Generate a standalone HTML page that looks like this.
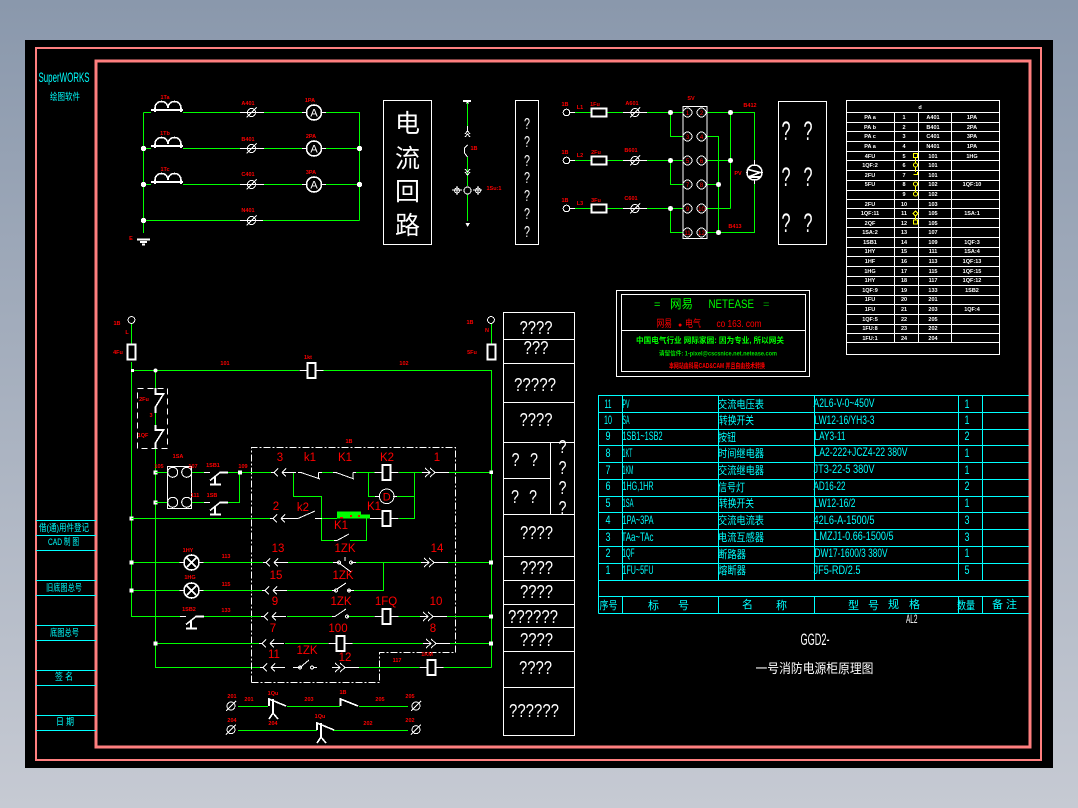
<!DOCTYPE html>
<html lang="zh">
<head>
<meta charset="utf-8">
<title>GGD2 一号消防电源柜原理图</title>
<style>
html,body{margin:0;padding:0;width:1078px;height:808px;overflow:hidden;background:linear-gradient(180deg,#8a98ac 0%,#c6cad3 100%)}
svg{position:absolute;left:0;top:0;display:block;shape-rendering:crispEdges}
text{font-family:"Liberation Sans","Noto Sans CJK SC",sans-serif}
.g{fill:none;stroke:#00ff00;stroke-width:1}
.w{fill:none;stroke:#fff;stroke-width:1}
.w2{fill:none;stroke:#fff;stroke-width:1.6}
.p{fill:none;stroke:#ff7f7f}
.cy{fill:none;stroke:#00ffff;stroke-width:1}
.d{fill:#fff;stroke:none}
.r{fill:#f00;font-size:5.5px;font-weight:bold;text-anchor:middle}
.n{fill:#f00;font-size:6px;text-anchor:middle}
.b{fill:#f00;font-size:11.5px;text-anchor:middle}
.t{fill:#fff;font-size:5.5px;font-weight:bold;text-anchor:middle}
.q{fill:#fff;font-size:18px;text-anchor:middle}
.c{fill:#0ff;font-size:12px}
.cm{fill:#0ff;font-size:12px;text-anchor:middle}
.h{fill:#0ff;font-size:11px}
.tb{fill:#0ff;font-size:9.5px}
.z{font-family:"WenQuanYi Zen Hei","Noto Sans CJK SC",sans-serif}
</style>
</head>
<body>
<svg width="1078" height="808" viewBox="0 0 1078 808" xmlns="http://www.w3.org/2000/svg">
<defs>
<g id="sc"><circle r="4" class="w"/><path class="w" d="M-5,5 L5,-5"/></g>
<g id="cl"><path class="w" d="M-2,0H1L5,-4M1,0L5,4M9,0L13,-4M9,0L13,4M9,0H23"/></g>
<g id="cr"><path class="w" d="M0,-4.5L5,0L0,4.5M5,-4.5L10,0L5,4.5M-3,0H5M10,0H24"/></g>
<g id="ct"><path class="w2" d="M-17,-2H15M-13,-2V0M13,-2V0"/><path class="w2" d="M-13,-3V-4A6.5,6.5 0 0 1 0,-4A6.5,6.5 0 0 1 13,-4V-3"/></g>
<g id="lamp"><circle r="7.5" class="w2"/><path class="w2" d="M-4.5,-4.5L4.5,4.5M-4.5,4.5L4.5,-4.5"/><path class="w" d="M-12,0H-8M8,0H12"/></g>
<g id="coil"><rect x="-4" y="-7.5" width="8" height="15" class="w2" stroke-width="2"/><path class="w" d="M-12,0H-5M5,0H12"/></g>
<g id="thr"><path class="w2" d="M0,0V-7L17,0M4,-7V8M0,13L4,7L9,13"/></g>
<g id="sb"><path class="w" d="M-6,0H0"/><path class="w2" d="M0,8L10,0H18M5,4V12M0,12H11"/></g>
</defs>

<!-- sheet -->
<rect x="25" y="40" width="1028" height="728" fill="#000"/>
<rect x="36" y="48" width="1005" height="712" class="p" stroke-width="2"/>
<rect x="96" y="61" width="934" height="686" class="p" stroke-width="3"/>

<!-- title block -->
<text x="38.5" y="82" fill="#0ff" font-size="14" textLength="51" lengthAdjust="spacingAndGlyphs">SuperWORKS</text>
<text x="50" y="100" class="tb" textLength="30" lengthAdjust="spacingAndGlyphs">绘图软件</text>
<path class="cy" d="M36,520.5H96M36,535.5H96M36,550.5H96M36,580.5H96M36,595.5H96M36,625.5H96M36,640.5H96M36,670.5H96M36,685.5H96M36,715.5H96M36,730.5H96"/>
<text x="39" y="531" class="tb" textLength="50" lengthAdjust="spacingAndGlyphs">借(通)用件登记</text>
<text x="48" y="545" class="tb" textLength="31" lengthAdjust="spacingAndGlyphs">CAD 制 图</text>
<text x="46" y="591" class="tb" textLength="36" lengthAdjust="spacingAndGlyphs">旧底图总号</text>
<text x="50" y="636" class="tb" textLength="29" lengthAdjust="spacingAndGlyphs">底图总号</text>
<text x="55" y="680" class="tb" textLength="18" lengthAdjust="spacingAndGlyphs">签 名</text>
<text x="56" y="725" class="tb" textLength="18" lengthAdjust="spacingAndGlyphs">日 期</text>

<!-- current circuit -->
<path class="g" d="M143.5,112.5V233M143.5,112.5H151M183,112.5H240M264,112.5H302M326,112.5H359.5V220.5M143.5,148.5H151M183,148.5H240M264,148.5H302M326,148.5H359.5M143.5,184.5H151M183,184.5H240M264,184.5H302M326,184.5H359.5M143.5,220.5H240M263,220.5H359.5"/>
<use href="#ct" x="168" y="112"/><use href="#ct" x="168" y="148"/><use href="#ct" x="168" y="184"/>
<path class="w" d="M240,112.5H264M240,148.5H264M240,184.5H264M240,220.5H263M302,112.5H306M322,112.5H326M302,148.5H306M322,148.5H326M302,184.5H306M322,184.5H326"/>
<use href="#sc" x="251.5" y="112.5"/><use href="#sc" x="251.5" y="148.5"/><use href="#sc" x="251.5" y="184.5"/><use href="#sc" x="251.5" y="220.5"/>
<circle cx="314" cy="112.5" r="7.5" class="w2"/><circle cx="314" cy="148.5" r="7.5" class="w2"/><circle cx="314" cy="184.5" r="7.5" class="w2"/>
<text x="314" y="116.5" fill="#fff" font-size="11" text-anchor="middle">A</text>
<text x="314" y="152.5" fill="#fff" font-size="11" text-anchor="middle">A</text>
<text x="314" y="188.5" fill="#fff" font-size="11" text-anchor="middle">A</text>
<circle cx="143.5" cy="148.5" r="2.7" class="d"/><circle cx="143.5" cy="184.5" r="2.7" class="d"/><circle cx="143.5" cy="220.5" r="2.7" class="d"/><circle cx="359.5" cy="148.5" r="2.7" class="d"/><circle cx="359.5" cy="184.5" r="2.7" class="d"/>
<path class="w2" d="M137,239.5H150M140,242H147M142,244.5H145"/>
<g>
<text class="r" x="165" y="99">1Ta</text><text class="r" x="165" y="135">1Tb</text><text class="r" x="165" y="171">1Tc</text>
<text class="r" x="248" y="105">A401</text><text class="r" x="248" y="141">B401</text><text class="r" x="248" y="176">C401</text><text class="r" x="248" y="212">N401</text>
<text class="r" x="310" y="102">1PA</text><text class="r" x="311" y="138">2PA</text><text class="r" x="311" y="174">3PA</text>
<text class="r" x="131" y="240">E</text><text class="r" x="474" y="150">1B</text><text class="r" x="494" y="190">1Su:1</text>
</g>

<!-- boxes -->
<rect x="383.5" y="100.5" width="48" height="144" class="w"/>
<g fill="#fff" font-size="25" text-anchor="middle" class="z">
<text x="407.5" y="132" class="z">电</text><text x="407.5" y="167" class="z">流</text><text x="407.5" y="200" class="z">回</text><text x="407.5" y="234" class="z">路</text>
</g>
<!-- vertical switch -->
<path class="w2" d="M463,101H471M467.5,101V104"/>
<path class="g" d="M467.5,103V126M467.5,157V186M467.5,194V221"/>
<path class="w" d="M467.5,126V132M465,134L467.5,131L470,134M465,137L467.5,134L470,137M467.5,145L464.5,148V153L467.5,157M465,169L467.5,172L470,169M465,172L467.5,175L470,172"/>
<circle cx="467.5" cy="190.5" r="3.5" class="w"/>
<path class="w" d="M457,186V195M482,190H473M462,190H452M478,186V195"/>
<circle cx="457" cy="190.5" r="2.5" class="w"/><circle cx="478" cy="190.5" r="2.5" class="w"/>
<path class="d" d="M465.5,223H470L467.5,227Z"/>
<rect x="515.5" y="100.5" width="23" height="144" class="w"/>
<g class="q" style="font-size:16px">
<text x="527" y="129" textLength="6" lengthAdjust="spacingAndGlyphs">?</text><text x="527" y="147" textLength="6" lengthAdjust="spacingAndGlyphs">?</text><text x="527" y="166" textLength="6" lengthAdjust="spacingAndGlyphs">?</text><text x="527" y="183" textLength="6" lengthAdjust="spacingAndGlyphs">?</text><text x="527" y="201" textLength="6" lengthAdjust="spacingAndGlyphs">?</text><text x="527" y="219" textLength="6" lengthAdjust="spacingAndGlyphs">?</text><text x="527" y="237" textLength="6" lengthAdjust="spacingAndGlyphs">?</text>
</g>

<!-- voltmeter circuit -->
<path class="g" d="M575,112.5H591M607,112.5H623M647,112.5H683M575,160.5H591M607,160.5H623M647,160.5H683M575,208.5H591M607,208.5H623M647,208.5H683M670.5,112.5V136.5H683M670.5,160.5V184.5H683M670.5,208.5V232.5H683M706,112.5H754.5V160M754.5,184V232.5H706M706,136.5H718.5V232.5M706,160.5H730.5M706,184.5H718.5M706,208.5H730.5M730.5,112.5V208.5"/>
<path class="w" d="M569,112.5H575M569,160.5H575M569,208.5H575M623,112.5H647M623,160.5H647M623,208.5H647M754.5,160V165M754.5,180V184"/>
<circle cx="566.5" cy="112.5" r="3.3" class="w"/><circle cx="566.5" cy="160.5" r="3.3" class="w"/><circle cx="566.5" cy="208.5" r="3.3" class="w"/>
<rect x="591.5" y="108.5" width="15" height="8" class="w2"/><rect x="591.5" y="156.5" width="15" height="8" class="w2"/><rect x="591.5" y="204.5" width="15" height="8" class="w2"/>
<use href="#sc" x="635" y="112.5"/><use href="#sc" x="635" y="160.5"/><use href="#sc" x="635" y="208.5"/>
<rect x="683" y="106.5" width="24" height="132" class="w"/>
<g class="w">
<circle cx="687.5" cy="112.5" r="4.5"/><circle cx="701.5" cy="112.5" r="4.5"/><circle cx="687.5" cy="136.5" r="4.5"/><circle cx="701.5" cy="136.5" r="4.5"/><circle cx="687.5" cy="160.5" r="4.5"/><circle cx="701.5" cy="160.5" r="4.5"/><circle cx="687.5" cy="184.5" r="4.5"/><circle cx="701.5" cy="184.5" r="4.5"/><circle cx="687.5" cy="208.5" r="4.5"/><circle cx="701.5" cy="208.5" r="4.5"/><circle cx="687.5" cy="232.5" r="4.5"/><circle cx="701.5" cy="232.5" r="4.5"/>
</g>
<g class="n">
<text x="687.5" y="115">1</text><text x="701.5" y="115">2</text><text x="687.5" y="139">3</text><text x="701.5" y="139">4</text><text x="687.5" y="163">5</text><text x="701.5" y="163">6</text><text x="687.5" y="187">7</text><text x="701.5" y="187">8</text><text x="687.5" y="211">9</text><text x="701.5" y="211">10</text><text x="687.5" y="235">11</text><text x="701.5" y="235">12</text>
</g>
<circle cx="670.5" cy="112.5" r="2.5" class="d"/><circle cx="670.5" cy="160.5" r="2.5" class="d"/><circle cx="670.5" cy="208.5" r="2.5" class="d"/><circle cx="730.5" cy="112.5" r="2.5" class="d"/><circle cx="730.5" cy="160.5" r="2.5" class="d"/><circle cx="718.5" cy="184.5" r="2.5" class="d"/><circle cx="718.5" cy="232.5" r="2.5" class="d"/>
<circle cx="754.5" cy="172.5" r="7.5" class="w2"/>
<path class="w2" d="M748,169.5L760,172.5L748,177H760"/>
<g>
<text class="r" x="565" y="106">1B</text><text class="r" x="580" y="109">L1</text><text class="r" x="595" y="106">1Fu</text><text class="r" x="632" y="105">A601</text><text class="r" x="691" y="100">SV</text><text class="r" x="750" y="107">B412</text>
<text class="r" x="565" y="154">1B</text><text class="r" x="580" y="157">L2</text><text class="r" x="596" y="154">2Fu</text><text class="r" x="631" y="152">B601</text>
<text class="r" x="565" y="202">1B</text><text class="r" x="580" y="205">L3</text><text class="r" x="596" y="202">3Fu</text><text class="r" x="631" y="200">C601</text>
<text class="r" x="738" y="175">PV</text><text class="r" x="735" y="228">B413</text>
</g>
<rect x="778.5" y="101.5" width="48" height="143" class="w"/>
<g fill="#fff" font-size="27" text-anchor="middle">
<text x="786" y="140" textLength="9" lengthAdjust="spacingAndGlyphs">?</text><text x="808" y="140" textLength="9" lengthAdjust="spacingAndGlyphs">?</text>
<text x="786" y="186" textLength="9" lengthAdjust="spacingAndGlyphs">?</text><text x="808" y="186" textLength="9" lengthAdjust="spacingAndGlyphs">?</text>
<text x="786" y="232" textLength="9" lengthAdjust="spacingAndGlyphs">?</text><text x="808" y="232" textLength="9" lengthAdjust="spacingAndGlyphs">?</text>
</g>

<!-- terminal table -->
<rect x="846.5" y="100.5" width="153" height="254" class="w"/>
<path class="w" d="M846,112.5H999M846,122.5H999M846,131.5H999M846,141.5H999M846,151.5H999M846,160.5H999M846,170.5H999M846,180.5H999M846,190.5H999M846,199.5H999M846,208.5H999M846,218.5H999M846,227.5H999M846,237.5H999M846,247.5H999M846,256.5H999M846,266.5H999M846,276.5H999M846,285.5H999M846,295.5H999M846,304.5H999M846,314.5H999M846,324.5H999M846,333.5H999M846,342.5H999M894.5,112V343M918.5,112V343M951.5,112V343"/>
<g class="t">
<text x="920" y="109">d</text>
<text x="870" y="119">PA a</text><text x="904" y="119">1</text><text x="933" y="119">A401</text><text x="972" y="119">1PA</text>
<text x="870" y="129">PA b</text><text x="904" y="129">2</text><text x="933" y="129">B401</text><text x="972" y="129">2PA</text>
<text x="870" y="138">PA c</text><text x="904" y="138">3</text><text x="933" y="138">C401</text><text x="972" y="138">3PA</text>
<text x="870" y="148">PA a</text><text x="904" y="148">4</text><text x="933" y="148">N401</text><text x="972" y="148">1PA</text>
<text x="870" y="158">4FU</text><text x="904" y="158">5</text><text x="933" y="158">101</text><text x="972" y="158">1HG</text>
<text x="870" y="167">1QF:2</text><text x="904" y="167">6</text><text x="933" y="167">101</text>
<text x="870" y="177">2FU</text><text x="904" y="177">7</text><text x="933" y="177">101</text>
<text x="870" y="186">5FU</text><text x="904" y="186">8</text><text x="933" y="186">102</text><text x="972" y="186">1QF:10</text>
<text x="904" y="196">9</text><text x="933" y="196">102</text>
<text x="870" y="206">2FU</text><text x="904" y="206">10</text><text x="933" y="206">103</text>
<text x="870" y="215">1QF:11</text><text x="904" y="215">11</text><text x="933" y="215">105</text><text x="972" y="215">1SA:1</text>
<text x="870" y="225">2QF</text><text x="904" y="225">12</text><text x="933" y="225">105</text>
<text x="870" y="234">1SA:2</text><text x="904" y="234">13</text><text x="933" y="234">107</text>
<text x="870" y="244">1SB1</text><text x="904" y="244">14</text><text x="933" y="244">109</text><text x="972" y="244">1QF:3</text>
<text x="870" y="253">1HY</text><text x="904" y="253">15</text><text x="933" y="253">111</text><text x="972" y="253">1SA:4</text>
<text x="870" y="263">1HF</text><text x="904" y="263">16</text><text x="933" y="263">113</text><text x="972" y="263">1QF:13</text>
<text x="870" y="273">1HG</text><text x="904" y="273">17</text><text x="933" y="273">115</text><text x="972" y="273">1QF:15</text>
<text x="870" y="282">1HY</text><text x="904" y="282">18</text><text x="933" y="282">117</text><text x="972" y="282">1QF:12</text>
<text x="870" y="292">1QF:9</text><text x="904" y="292">19</text><text x="933" y="292">133</text><text x="972" y="292">1SB2</text>
<text x="870" y="301">1FU</text><text x="904" y="301">20</text><text x="933" y="301">201</text>
<text x="870" y="311">1FU</text><text x="904" y="311">21</text><text x="933" y="311">203</text><text x="972" y="311">1QF:4</text>
<text x="870" y="321">1QF:5</text><text x="904" y="321">22</text><text x="933" y="321">205</text>
<text x="870" y="330">1FU:8</text><text x="904" y="330">23</text><text x="933" y="330">202</text>
<text x="870" y="340">1FU:1</text><text x="904" y="340">24</text><text x="933" y="340">204</text>
</g>
<path fill="none" stroke="#ffff00" d="M915.5,158V163M915.5,167V172M915.5,186V192M915.5,215V220"/>
<g fill="none" stroke="#ffff00">
<rect x="913.5" y="153.5" width="4" height="4"/><circle cx="915.5" cy="165" r="2"/><path d="M913.5,174.5H917.5V172"/>
<circle cx="915.5" cy="184" r="2"/><circle cx="915.5" cy="194" r="2"/>
<path d="M915.5,211L918,213.5L915.5,216L913,213.5Z"/><rect x="913.5" y="220" width="4" height="4"/>
</g>

<!-- netease box -->
<rect x="616.5" y="290.5" width="193" height="86" class="w"/>
<rect x="621.5" y="294.5" width="184" height="77" class="w"/>
<path class="w" d="M621,330.5H805"/>
<g fill="#00ff00" font-size="12">
<text x="654" y="308" font-size="11">=</text>
<text x="670" y="308" textLength="23" lengthAdjust="spacingAndGlyphs">网易</text>
<text x="708.5" y="308" textLength="45.5" lengthAdjust="spacingAndGlyphs">NETEASE</text>
</g>
<text x="763" y="308" fill="#00a000" font-size="11">=</text>
<g fill="#f00" font-size="10">
<text x="656.5" y="327" textLength="15.5" lengthAdjust="spacingAndGlyphs">网易</text>
<text x="678" y="327" font-size="7">●</text>
<text x="685" y="327" textLength="16" lengthAdjust="spacingAndGlyphs">电气</text>
<text x="716.5" y="327" textLength="45" lengthAdjust="spacingAndGlyphs">co 163. com</text>
</g>
<text x="636" y="343" fill="#00ff00" font-size="8" font-weight="bold" textLength="148" lengthAdjust="spacingAndGlyphs">中国电气行业 网际家园: 因为专业, 所以网关</text>
<text x="659" y="355.5" fill="#00e000" font-size="6" font-weight="bold" textLength="118" lengthAdjust="spacingAndGlyphs">请留信件: 1-pixel@cscsnice.net.netease.com</text>
<text x="669" y="368" fill="#f00" font-size="7" font-weight="bold" textLength="96" lengthAdjust="spacingAndGlyphs">本网站由科局CAD&amp;CAM 并且自由技术转换</text>

<!-- parts list -->
<path class="cy" d="M598.5,395.5H1029M598.5,412.5H1029M598.5,429.5H1029M598.5,445.5H1029M598.5,462.5H1029M598.5,479.5H1029M598.5,496.5H1029M598.5,512.5H1029M598.5,529.5H1029M598.5,546.5H1029M598.5,563.5H1029M598.5,580.5H1029M598.5,596.5H1029M598.5,613.5H1029M598.5,395V613.5M622.5,395V580.5M718.5,395V580.5M814.5,395V580.5M958.5,395V580.5M982.5,395V580.5M622.5,596.5V613.5M718.5,596.5V613.5M814.5,596.5V613.5M958.5,596.5V613.5M982.5,596.5V613.5"/>
<g class="cm">
<text x="608" y="408" textLength="7" lengthAdjust="spacingAndGlyphs">11</text><text x="608" y="424" textLength="8" lengthAdjust="spacingAndGlyphs">10</text><text x="608" y="440" textLength="5" lengthAdjust="spacingAndGlyphs">9</text><text x="608" y="457" textLength="5" lengthAdjust="spacingAndGlyphs">8</text><text x="608" y="474" textLength="5" lengthAdjust="spacingAndGlyphs">7</text><text x="608" y="490" textLength="5" lengthAdjust="spacingAndGlyphs">6</text><text x="608" y="507" textLength="5" lengthAdjust="spacingAndGlyphs">5</text><text x="608" y="524" textLength="5" lengthAdjust="spacingAndGlyphs">4</text><text x="608" y="541" textLength="5" lengthAdjust="spacingAndGlyphs">3</text><text x="608" y="557" textLength="5" lengthAdjust="spacingAndGlyphs">2</text><text x="608" y="574" textLength="5" lengthAdjust="spacingAndGlyphs">1</text>
<text x="967" y="408" textLength="5" lengthAdjust="spacingAndGlyphs">1</text><text x="967" y="424" textLength="5" lengthAdjust="spacingAndGlyphs">1</text><text x="967" y="440" textLength="5" lengthAdjust="spacingAndGlyphs">2</text><text x="967" y="457" textLength="5" lengthAdjust="spacingAndGlyphs">1</text><text x="967" y="474" textLength="5" lengthAdjust="spacingAndGlyphs">1</text><text x="967" y="490" textLength="5" lengthAdjust="spacingAndGlyphs">2</text><text x="967" y="507" textLength="5" lengthAdjust="spacingAndGlyphs">1</text><text x="967" y="524" textLength="5" lengthAdjust="spacingAndGlyphs">3</text><text x="967" y="541" textLength="5" lengthAdjust="spacingAndGlyphs">3</text><text x="967" y="557" textLength="5" lengthAdjust="spacingAndGlyphs">1</text><text x="967" y="574" textLength="5" lengthAdjust="spacingAndGlyphs">5</text>
</g>
<g class="c">
<text x="622.5" y="408" textLength="7" lengthAdjust="spacingAndGlyphs">PV</text>
<text x="622.5" y="424" textLength="7" lengthAdjust="spacingAndGlyphs">SA</text>
<text x="622.5" y="440" textLength="40" lengthAdjust="spacingAndGlyphs">1SB1~1SB2</text>
<text x="622.5" y="457" textLength="10" lengthAdjust="spacingAndGlyphs">1KT</text>
<text x="622.5" y="474" textLength="11" lengthAdjust="spacingAndGlyphs">1KM</text>
<text x="622.5" y="490" textLength="31" lengthAdjust="spacingAndGlyphs">1HG,1HR</text>
<text x="622.5" y="507" textLength="11" lengthAdjust="spacingAndGlyphs">1SA</text>
<text x="622.5" y="524" textLength="31" lengthAdjust="spacingAndGlyphs">1PA~3PA</text>
<text x="621.5" y="541" textLength="32" lengthAdjust="spacingAndGlyphs">TAa~TAc</text>
<text x="622.5" y="557" textLength="12" lengthAdjust="spacingAndGlyphs">1QF</text>
<text x="622.5" y="574" textLength="31" lengthAdjust="spacingAndGlyphs">1FU~5FU</text>
<text x="813.5" y="407" textLength="61" lengthAdjust="spacingAndGlyphs">A2L6-V-0~450V</text>
<text x="814.5" y="424" textLength="60" lengthAdjust="spacingAndGlyphs">LW12-16/YH3-3</text>
<text x="814.5" y="440" textLength="31" lengthAdjust="spacingAndGlyphs">LAY3-11</text>
<text x="814.5" y="456" textLength="93" lengthAdjust="spacingAndGlyphs">LA2-222+JCZ4-22 380V</text>
<text x="813.5" y="473" textLength="61" lengthAdjust="spacingAndGlyphs">JT3-22-5 380V</text>
<text x="813.5" y="490" textLength="32" lengthAdjust="spacingAndGlyphs">AD16-22</text>
<text x="814.5" y="507" textLength="41" lengthAdjust="spacingAndGlyphs">LW12-16/2</text>
<text x="813.5" y="524" textLength="61" lengthAdjust="spacingAndGlyphs">42L6-A-1500/5</text>
<text x="814.5" y="540" textLength="79" lengthAdjust="spacingAndGlyphs">LMZJ1-0.66-1500/5</text>
<text x="814.5" y="557" textLength="73" lengthAdjust="spacingAndGlyphs">DW17-1600/3 380V</text>
<text x="813.5" y="574" textLength="47" lengthAdjust="spacingAndGlyphs">JF5-RD/2.5</text>
</g>
<g class="h">
<text x="718" y="408" textLength="46" lengthAdjust="spacingAndGlyphs">交流电压表</text>
<text x="719" y="424" textLength="35" lengthAdjust="spacingAndGlyphs">转换开关</text>
<text x="718" y="441" textLength="18" lengthAdjust="spacingAndGlyphs">按钮</text>
<text x="718" y="457" textLength="46" lengthAdjust="spacingAndGlyphs">时间继电器</text>
<text x="718" y="474" textLength="46" lengthAdjust="spacingAndGlyphs">交流继电器</text>
<text x="718" y="491" textLength="27" lengthAdjust="spacingAndGlyphs">信号灯</text>
<text x="719" y="507" textLength="35" lengthAdjust="spacingAndGlyphs">转换开关</text>
<text x="718" y="524" textLength="46" lengthAdjust="spacingAndGlyphs">交流电流表</text>
<text x="718" y="541" textLength="46" lengthAdjust="spacingAndGlyphs">电流互感器</text>
<text x="718" y="558" textLength="28" lengthAdjust="spacingAndGlyphs">断路器</text>
<text x="718" y="574" textLength="28" lengthAdjust="spacingAndGlyphs">熔断器</text>
<text x="599.5" y="609" textLength="18" lengthAdjust="spacingAndGlyphs">序号</text>
<text x="648" y="609">标</text><text x="678" y="609">号</text>
<text x="742" y="608">名</text><text x="776" y="609">称</text>
<text x="848" y="609">型</text><text x="868" y="609">号</text><text x="888" y="608">规</text><text x="909" y="608">格</text>
<text x="957" y="609" textLength="18" lengthAdjust="spacingAndGlyphs">数量</text>
<text x="992" y="608">备</text><text x="1006" y="608">注</text>
</g>
<text x="906" y="623" fill="#fff" font-size="12" textLength="11.5" lengthAdjust="spacingAndGlyphs">AL2</text>
<text x="800.5" y="645" fill="#fff" font-size="16.5" textLength="29" lengthAdjust="spacingAndGlyphs">GGD2-</text>
<text x="755.5" y="673" fill="#fff" font-size="13" textLength="118" lengthAdjust="spacingAndGlyphs">一号消防电源柜原理图</text>

<!-- control circuit rails -->
<path class="g" d="M131.5,324V344M131.5,362V616.5H180M155.5,370.5V388M155.5,448V667.5H262M131.5,370.5H299M323,370.5H491.5V667.5M491.5,324V344M155.5,412V425"/>
<circle cx="131.5" cy="320" r="3.4" class="w"/><circle cx="491" cy="320" r="3.4" class="w"/>
<rect x="127.5" y="344.5" width="8" height="15" class="w2"/><rect x="487.5" y="344.5" width="8" height="15" class="w2"/>
<use href="#coil" x="311.5" y="370.5"/>
<rect x="131" y="369" width="3" height="3" class="d"/><circle cx="155.5" cy="370.5" r="2" class="d"/>
<rect x="137.5" y="388.5" width="30" height="60" fill="none" stroke="#fff" stroke-dasharray="6 4"/>
<path class="w2" d="M155.5,388V394H163.5L155.5,407V413M155.5,425V430H163.5L155.5,443V448"/>
<rect x="153.5" y="470.5" width="4" height="4" class="d"/><rect x="153.5" y="500.5" width="4" height="4" class="d"/><rect x="129.5" y="516.5" width="4" height="4" class="d"/>
<rect x="167.5" y="466.5" width="24" height="42" class="w"/>
<circle cx="172.7" cy="472.3" r="5" class="w"/><circle cx="186.7" cy="472.3" r="5" class="w"/><circle cx="172.7" cy="502.3" r="5" class="w"/><circle cx="186.7" cy="502.3" r="5" class="w"/>
<path class="g" d="M155.5,472.5H167M155.5,502.5H167M192,472.5H204M192,502.5H204M228,472.5H267M239.5,472.5V502.5H228M131.5,518.5H266"/>
<use href="#sb" x="210" y="472.5"/><use href="#sb" x="210" y="502.5"/>
<rect x="238" y="470.5" width="4" height="4" class="d"/>
<!-- dash-dot control box -->
<path fill="none" stroke="#fff" stroke-dasharray="7 2 2 2" d="M251.5,682.5V447.5H455.5V652.5H379.5V682.5H251.5"/>

<!-- row 3/1 -->
<path class="g" d="M242,472.5H272M298,472.5V472.5M322,472.5H333M356,472.5H375M399,472.5H425M449,472.5H491.5M293.5,472.5V496.5H321.5V540.5H334M368.5,472.5V496.5H375M394,496.5H414.5M414.5,472.5V518.5H399M322,518.5H337M366.5,518.5V540.5H350M266,518.5H272M290,518.5H295"/>
<use href="#cl" x="273" y="472.5"/><use href="#cr" x="425" y="472.5"/>
<path class="w" d="M298,472.5H301L320,479M318.5,472.5V479M322,472.5H318.5M333,472.5H336L354,479M353,472.5V479M356,472.5H353"/>
<use href="#coil" x="386.5" y="472.5"/>
<circle cx="386.7" cy="496.3" r="7.3" class="w"/>
<path class="w" d="M375,496.5H380M393,496.5H397"/>
<text x="386.7" y="500.5" fill="#f00" font-size="11" text-anchor="middle">D</text>
<use href="#cl" x="272" y="518.5"/>
<path class="w" d="M295,518.5H298L315,511M315,518.5H322"/>
<path d="M337,511.5H361V514.5H370V518.5H337Z" fill="#00ff00"/>
<path d="M340,517H343V518.5H340ZM350,515H352V517H350ZM358,515H360V517H358Z" fill="#f00"/>
<path class="w" d="M370,518.5H382"/>
<use href="#coil" x="386.5" y="518.5"/>
<path class="w" d="M334,540.5H337L349,534M350,540.5H350"/>
<rect x="489.5" y="470.5" width="3.5" height="3.5" class="d"/>

<!-- rows -->
<path class="g" d="M131.5,562.5H180M200,562.5H265M288,562.5H333M356,562.5H423M448,562.5H491.5M131.5,590.5H180M200,590.5H264M287,590.5H332M354,590.5H383.5V562.5M204,616.5H263M287,616.5H332M348,616.5H374M398,616.5H422M447,616.5H491.5M155.5,643.5H260M285,643.5H328M352,643.5H425M445,643.5H491.5M353,667.5H419M443,667.5H491.5"/>
<use href="#lamp" x="191.5" y="562.5"/><use href="#lamp" x="191.5" y="590.5"/>
<use href="#cl" x="265" y="562.5"/><use href="#cl" x="264" y="590.5"/><use href="#cl" x="263" y="616.5"/><use href="#cl" x="261" y="643.5"/><use href="#cl" x="262" y="667.5"/>
<use href="#cr" x="424" y="562.5"/><use href="#cr" x="423" y="616.5"/><use href="#cr" x="426" y="643.5"/><use href="#cr" x="335" y="667.5"/>
<path class="w" d="M333,562.5H339M339,563L351,572M345,557V561M351,562.5H356"/>
<circle cx="339" cy="562.5" r="1.4" class="w"/><circle cx="351" cy="562.5" r="1.4" class="w"/>
<path class="w" d="M332,590.5H336M337,589L346,583M348,590.5H354"/>
<circle cx="336" cy="590.5" r="1.4" class="w"/><circle cx="349" cy="590.5" r="1.4" class="w"/>
<path class="w" d="M332,616.5H335L346,609M347,616.5H348"/>
<circle cx="347" cy="616.5" r="1.4" class="w"/>
<use href="#coil" x="386.5" y="616.5"/><use href="#coil" x="340.5" y="643.5"/>
<path class="w" d="M293,667.5H300L309,660M314,667.5H317"/>
<circle cx="300" cy="667.5" r="1.4" class="w"/><circle cx="312" cy="667.5" r="1.4" class="w"/>
<use href="#coil" x="431.5" y="667.5"/>
<use href="#sb" x="186" y="616.5"/>
<rect x="129.5" y="560.5" width="4" height="4" class="d"/><rect x="129.5" y="588.5" width="4" height="4" class="d"/><rect x="153.5" y="641.5" width="4" height="4" class="d"/><rect x="489" y="560.5" width="4" height="4" class="d"/><rect x="489" y="614.5" width="4" height="4" class="d"/><rect x="489" y="641.5" width="4" height="4" class="d"/>

<!-- bottom rows -->
<use href="#sc" x="231" y="706"/><use href="#sc" x="416" y="706"/><use href="#sc" x="231" y="729.7"/><use href="#sc" x="416" y="729.7"/>
<path class="g" d="M238,706.5H268M287,706.5H340M359,706.5H408M238,730.5H317M333,730.5H408"/>
<use href="#thr" x="269" y="706"/><use href="#thr" x="317" y="730"/>
<path class="w2" d="M340.5,706V699L358,706"/>

<!-- control labels -->
<g class="r">
<text x="117" y="325">1B</text><text x="127" y="334">L</text><text x="118" y="354">4Fu</text>
<text x="470" y="324">1B</text><text x="487" y="332">N</text><text x="472" y="354">5Fu</text>
<text x="308" y="359">1kt</text><text x="225" y="365">101</text><text x="404" y="365">102</text>
<text x="144" y="401">2Fu</text><text x="151" y="417">3</text><text x="143" y="437">1QF</text>
<text x="349" y="443">1B</text><text x="178" y="458">1SA</text><text x="159" y="468">105</text><text x="193" y="468">107</text><text x="213" y="467">1SB1</text><text x="243" y="468">109</text><text x="195" y="497">111</text><text x="212" y="497">1SB</text>
<text x="188" y="552">1HY</text><text x="190" y="579">1HG</text><text x="226" y="558">113</text><text x="226" y="586">115</text><text x="189" y="611">1SB2</text><text x="226" y="612">133</text><text x="397" y="662">117</text><text x="427" y="656">1KM</text>
<text x="232" y="698">201</text><text x="249" y="701">201</text><text x="273" y="695">1Qu</text><text x="309" y="701">203</text><text x="343" y="694">1B</text><text x="380" y="701">205</text><text x="410" y="698">205</text>
<text x="232" y="722">204</text><text x="273" y="725">204</text><text x="320" y="718">1Qu</text><text x="368" y="725">202</text><text x="410" y="722">202</text>
</g>
<g class="b">
<text x="280" y="461">3</text><text x="310" y="461">k1</text><text x="345" y="461">K1</text><text x="387" y="461">K2</text><text x="437" y="461">1</text>
<text x="276" y="510">2</text><text x="303" y="511">k2</text><text x="374" y="510">K1</text><text x="341" y="529">K1</text>
<text x="278" y="552">13</text><text x="345" y="552">1ZK</text><text x="437" y="552">14</text>
<text x="276" y="579">15</text><text x="343" y="579">1ZK</text>
<text x="275" y="605">9</text><text x="341" y="605">1ZK</text><text x="386" y="605">1FQ</text><text x="436" y="605">10</text>
<text x="273" y="632">7</text><text x="338" y="632">100</text><text x="433" y="632">8</text>
<text x="274" y="658">11</text><text x="307" y="654">1ZK</text><text x="345" y="661">12</text>
</g>

<!-- question mark stack -->
<path class="w" d="M503.5,312.5H574.5V735.5H503.5ZM503.5,339.5H574.5M503.5,363.5H574.5M503.5,402.5H574.5M503.5,442.5H574.5M503.5,514.5H574.5M503.5,556.5H574.5M503.5,580.5H574.5M503.5,604.5H574.5M503.5,627.5H574.5M503.5,651.5H574.5M503.5,687.5H574.5M503.5,478.5H550.5M550.5,442.5V514.5"/>
<g class="q">
<text x="536" y="334" textLength="33" lengthAdjust="spacingAndGlyphs">????</text>
<text x="536" y="354" textLength="25" lengthAdjust="spacingAndGlyphs">???</text>
<text x="535" y="391" textLength="42" lengthAdjust="spacingAndGlyphs">?????</text>
<text x="536" y="426" textLength="33" lengthAdjust="spacingAndGlyphs">????</text>
<text x="515.5" y="466" textLength="8" lengthAdjust="spacingAndGlyphs">?</text><text x="534" y="466" textLength="8" lengthAdjust="spacingAndGlyphs">?</text>
<text x="515" y="503" textLength="8" lengthAdjust="spacingAndGlyphs">?</text><text x="533" y="503" textLength="8" lengthAdjust="spacingAndGlyphs">?</text>
<text x="562.5" y="453" textLength="8" lengthAdjust="spacingAndGlyphs">?</text><text x="562.5" y="474" textLength="8" lengthAdjust="spacingAndGlyphs">?</text><text x="562.5" y="494" textLength="8" lengthAdjust="spacingAndGlyphs">?</text><text x="562.5" y="514" textLength="8" lengthAdjust="spacingAndGlyphs">?</text>
<text x="536.5" y="539" textLength="33" lengthAdjust="spacingAndGlyphs">????</text>
<text x="536.5" y="574" textLength="33" lengthAdjust="spacingAndGlyphs">????</text>
<text x="536.5" y="598" textLength="33" lengthAdjust="spacingAndGlyphs">????</text>
<text x="533" y="623" textLength="50" lengthAdjust="spacingAndGlyphs">??????</text>
<text x="536.5" y="646" textLength="33" lengthAdjust="spacingAndGlyphs">????</text>
<text x="535.5" y="674" textLength="33" lengthAdjust="spacingAndGlyphs">????</text>
<text x="534" y="717" textLength="50" lengthAdjust="spacingAndGlyphs">??????</text>
</g>
</svg>
</body>
</html>
